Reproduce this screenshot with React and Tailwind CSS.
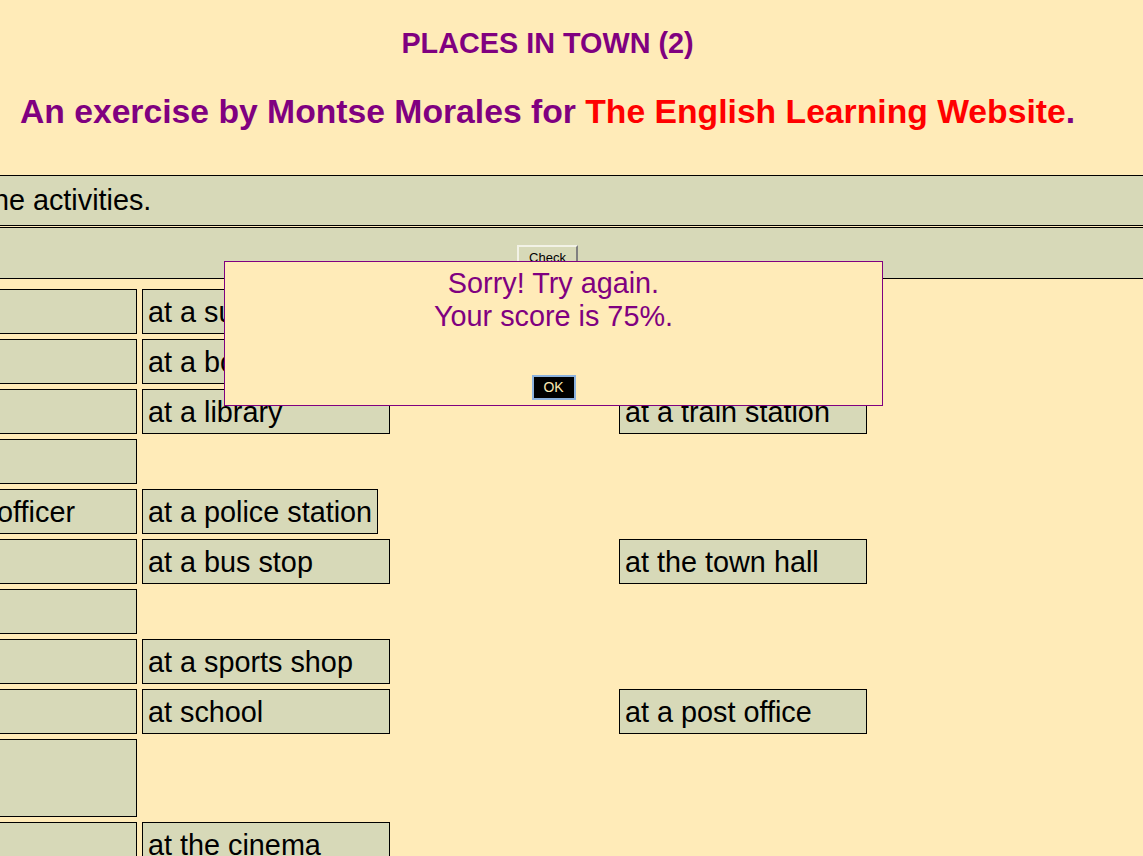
import React from 'react';

const rows = [
  { left: 'buy food', mid: 'at a supermarket', right: 'at a bank' },
  { left: 'buy a book', mid: 'at a bookshop', right: 'at a hospital' },
  { left: 'borrow books', mid: 'at a library', right: 'at a train station' },
  { left: 'see a doctor' },
  { left: 'talk to a police officer', mid: 'at a police station', midW: 'w-[236px]' },
  { left: 'wait for a bus', mid: 'at a bus stop', right: 'at the town hall' },
  { left: 'go swimming' },
  { left: 'buy a football', mid: 'at a sports shop' },
  { left: 'study', mid: 'at school', right: 'at a post office' },
  { left: ['send a parcel', 'to a friend'] },
  { left: 'watch a film', mid: 'at the cinema' },
];

function Card({ children, className = '' }) {
  return (
    <div className={`border border-black bg-[#d7d9b8] pl-[5px] pr-[4px] pt-[6px] pb-[4px] text-[28.8px] leading-[33px] text-black ${className}`}>
      {children}
    </div>
  );
}

export default function App() {
  return (
    <div className="relative w-[1143px] h-[856px] overflow-hidden bg-[#ffebb8] font-['Liberation_Sans',Arial,sans-serif]">
      <div className="-ml-[330px] w-[1755px]">
        <h2 className="pt-[27px] text-center text-[28.8px] leading-[33px] font-bold text-[#800080]">
          PLACES IN TOWN (2)
        </h2>
        <h3 className="mt-[32px] text-center text-[33.7px] leading-[39px] font-bold text-[#800080]">
          An exercise by Montse Morales for <span className="text-[#ff0000]">The English Learning Website</span>.
        </h3>

        <div className="mt-[44px] h-[51px] flex items-center border-y border-black bg-[#d7d9b8] pl-[30px] text-[28.8px] leading-[33px] text-black">
          Match the places with the activities.
        </div>

        <div className="mt-[1px] h-[52px] flex justify-center items-start border-y border-black bg-[#d7d9b8] pt-[17px]">
          <button className="w-[61px] h-[25px] border-2 border-t-[#f2f2e6] border-l-[#f2f2e6] border-r-[#808080] border-b-[#808080] bg-[#d7d9b8] text-[13px] leading-[16px] text-black">
            Check
          </button>
        </div>

        <div className="mt-[10px] flex flex-col gap-[5px]">
          {rows.map((r, i) => (
            <div key={i} className="flex items-start pl-[129px]">
              <Card className="w-[338px]">
                {Array.isArray(r.left) ? (
                  <>
                    {r.left[0]}
                    <br />
                    {r.left[1]}
                  </>
                ) : (
                  r.left
                )}
              </Card>
              <div className="ml-[5px] w-[248px]">
                {r.mid && <Card className={r.midW || 'w-[248px]'}>{r.mid}</Card>}
              </div>
              <div className="ml-[229px] w-[248px]">
                {r.right && <Card className="w-[248px]">{r.right}</Card>}
              </div>
            </div>
          ))}
        </div>
      </div>

      <div className="absolute left-[224px] top-[261px] w-[659px] h-[145px] border border-[#800080] bg-[#ffebb8] pt-[5px] flex flex-col items-center">
        <p className="text-center text-[28.8px] leading-[33px] text-[#800080]">
          Sorry! Try again.
          <br />
          Your score is 75%.
        </p>
        <button className="mt-[42px] w-[44px] h-[25px] border-2 border-[#8cb2de] bg-black text-[14px] leading-[15px] text-[#fbe9b4]">
          OK
        </button>
      </div>
    </div>
  );
}
